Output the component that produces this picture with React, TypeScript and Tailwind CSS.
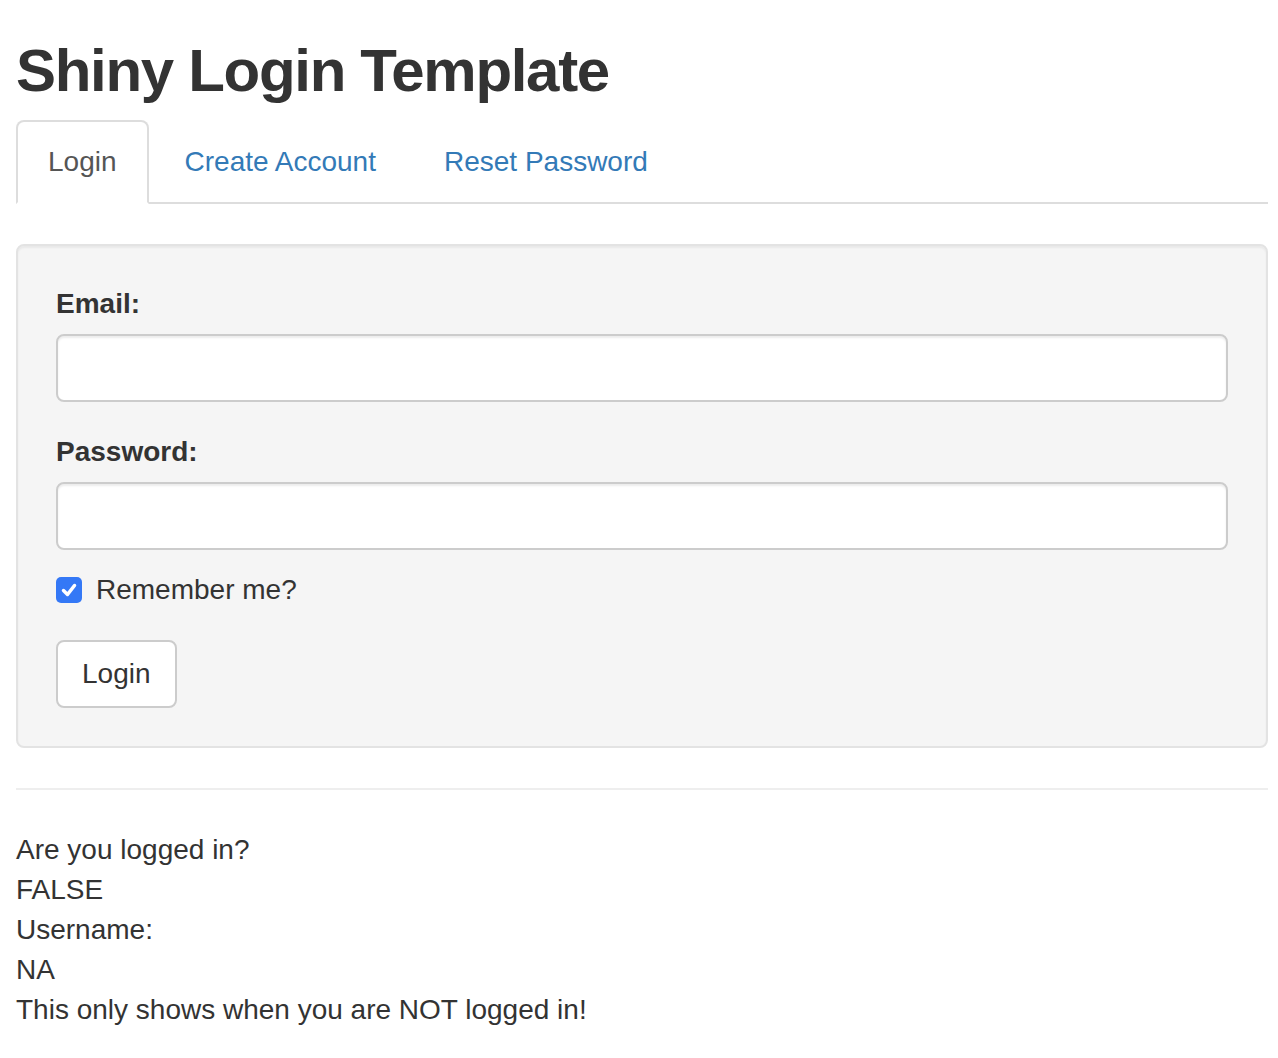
const tabs = ["Login", "Create Account", "Reset Password"];

const status = [
  "Are you logged in?",
  "FALSE",
  "Username:",
  "NA",
  "This only shows when you are NOT logged in!",
];

export default function App() {
  return (
    <div className="min-h-[1058px] bg-white pl-4 pr-[10px] font-['Liberation_Sans',Arial,sans-serif] text-[28px] leading-10 text-[#333]">
      <h1 className="mt-[38px] text-[60px] font-bold leading-[66px] tracking-[-1.3px]">
        Shiny Login Template
      </h1>

      {/* Tabs */}
      <ul className="mt-4 flex border-b-2 border-[#ddd]">
        {tabs.map((tab, i) => (
          <li key={tab} className="-mb-[2px] mr-1">
            <a
              className={
                i === 0
                  ? "block rounded-t-lg border-2 border-[#ddd] border-b-transparent bg-white px-[30px] py-5 text-[#555]"
                  : "block rounded-t-lg border-2 border-transparent px-[30px] py-5 text-[#337ab7]"
              }
            >
              {tab}
            </a>
          </li>
        ))}
      </ul>

      {/* Login well */}
      <div className="mt-10 rounded-lg border-2 border-[#e3e3e3] bg-[#f5f5f5] p-[38px] shadow-[inset_0_2px_2px_rgba(0,0,0,0.05)]">
        <div className="mb-[30px]">
          <label className="mb-[10px] block font-bold">Email:</label>
          <div className="h-[68px] rounded-lg border-2 border-[#ccc] bg-white shadow-[inset_0_2px_2px_rgba(0,0,0,0.075)]" />
        </div>
        <div>
          <label className="mb-[10px] block font-bold">Password:</label>
          <div className="h-[68px] rounded-lg border-2 border-[#ccc] bg-white shadow-[inset_0_2px_2px_rgba(0,0,0,0.075)]" />
        </div>

        <div className="mt-5 flex items-center gap-[14px]">
          <span className="flex h-[26px] w-[26px] items-center justify-center rounded-[5px] bg-[#3478f6]">
            <svg width="18" height="18" viewBox="0 0 18 18" fill="none">
              <path
                d="M3.5 9.5 L7.5 13.5 L14.5 4.5"
                stroke="white"
                strokeWidth="3.5"
                strokeLinecap="round"
                strokeLinejoin="round"
              />
            </svg>
          </span>
          <span>Remember me?</span>
        </div>

        <button className="mt-[30px] h-[68px] rounded-lg border-2 border-[#ccc] bg-white px-6 text-[#333]">
          Login
        </button>
      </div>

      <hr className="my-10 border-t-2 border-[#eee]" />

      <div>
        {status.map((line) => (
          <div key={line}>{line}</div>
        ))}
      </div>
    </div>
  );
}
